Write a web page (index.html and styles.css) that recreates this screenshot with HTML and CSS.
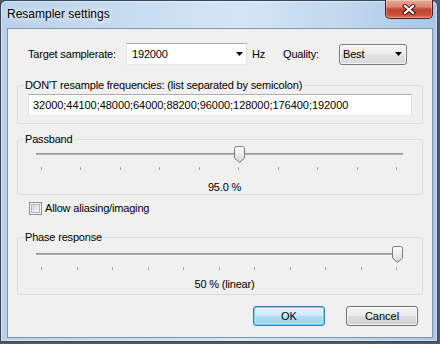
FILE: index.html
```html
<!DOCTYPE html>
<html lang="en">
<head>
    <meta charset="UTF-8">
    <title>Resampler settings</title>
    <link rel="stylesheet" href="styles.css">
</head>
<body>
    <div class="window">
        <div class="titlebar">
            <span class="title">Resampler settings</span>
            <button class="close" type="button">
                <svg width="14" height="11" viewBox="0 0 14 11">
                    <path d="M3 2L11 9M11 2L3 9" stroke="#3b1812" stroke-width="4.2" stroke-linecap="square"/>
                    <path d="M3 2L11 9M11 2L3 9" stroke="#fff" stroke-width="2.2" stroke-linecap="square"/>
                </svg>
            </button>
        </div>
        <div class="client">
            <div class="rate-row">
                <span class="rate-label">Target samplerate:</span>
                <div class="combo combo-edit">
                    <span>192000</span>
                    <svg width="7" height="4" viewBox="0 0 7 4"><path d="M0 0H7L3.5 4Z"/></svg>
                </div>
                <span class="hz">Hz</span>
                <span class="quality-label">Quality:</span>
                <div class="combo combo-list">
                    <span>Best</span>
                    <svg width="7" height="4" viewBox="0 0 7 4"><path d="M0 0H7L3.5 4Z"/></svg>
                </div>
            </div>

            <fieldset class="group freq-group">
                <legend>DON'T resample frequencies: (list separated by semicolon)</legend>
                <div class="textbox">32000;44100;48000;64000;88200;96000;128000;176400;192000</div>
            </fieldset>

            <fieldset class="group passband-group">
                <legend>Passband</legend>
                <div class="slider">
                    <div class="track"></div>
                    <div class="ticks">
                        <i></i><i></i><i></i><i></i><i></i><i></i><i></i><i></i><i></i><i></i>
                    </div>
                    <svg class="thumb" style="left: calc((100% - 11px) * 0.5556)" width="11" height="17" viewBox="0 0 11 17">
                        <defs>
                            <linearGradient id="thumbfill" x1="0" y1="0" x2="0" y2="1">
                                <stop offset="0" stop-color="#fdfdfd"/>
                                <stop offset="0.5" stop-color="#ececec"/>
                                <stop offset="1" stop-color="#d4d4d4"/>
                            </linearGradient>
                        </defs>
                        <path d="M0.5 2.5Q0.5 0.5 2.5 0.5H8.5Q10.5 0.5 10.5 2.5V12L5.5 16.5L0.5 12Z" fill="url(#thumbfill)" stroke="#7a7a7a"/>
                    </svg>
                </div>
                <div class="value">95.0 %</div>
            </fieldset>

            <div class="check-row">
                <span class="check"></span>
                <span>Allow aliasing/imaging</span>
            </div>

            <fieldset class="group phase-group">
                <legend>Phase response</legend>
                <div class="slider">
                    <div class="track"></div>
                    <div class="ticks">
                        <i></i><i></i><i></i><i></i><i></i><i></i><i></i><i></i><i></i><i></i><i></i>
                    </div>
                    <svg class="thumb" style="left: calc((100% - 11px) * 1)" width="11" height="17" viewBox="0 0 11 17">
                        <path d="M0.5 2.5Q0.5 0.5 2.5 0.5H8.5Q10.5 0.5 10.5 2.5V12L5.5 16.5L0.5 12Z" fill="url(#thumbfill)" stroke="#7a7a7a"/>
                    </svg>
                </div>
                <div class="value">50 % (linear)</div>
            </fieldset>

            <div class="buttons">
                <button class="btn btn-default" type="button">OK</button>
                <button class="btn" type="button">Cancel</button>
            </div>
        </div>
    </div>
</body>
</html>
```

FILE: styles.css
```css
/* reset */
*, *:before, *:after {
    margin: 0;
    padding: 0;
    box-sizing: border-box;
}
html, body {
    width: 440px;
    height: 344px;
}
body {
    overflow: hidden;
    background: #4f5b68;
    color: #000;
    font: 11px/13px "Liberation Sans", Arial, sans-serif;
    letter-spacing: -0.18px;
}

/* window frame */
.window {
    width: 438px;
    height: 342px;
    padding: 0 4px 3px 6px;
    border: 1px solid #34465a;
    border-radius: 6px 6px 0 0;
    background: linear-gradient(90deg, #b8d0e9 0%, #c8ddf1 30%, #d4e5f5 55%, #c2d8ee 78%, #a8c7e7 100%);
    box-shadow: inset 0 0 0 1px rgba(255, 255, 255, 0.45);
}
.titlebar {
    height: 27px;
    display: flex;
    align-items: flex-start;
}
.title {
    padding-top: 6px;
    font-size: 12px;
    line-height: 15px;
    letter-spacing: 0;
    text-shadow: 0 0 6px #fff, 0 0 10px rgba(255, 255, 255, 0.8);
}
.close {
    margin-left: auto;
    margin-top: -1px;
    width: 48px;
    height: 19px;
    display: flex;
    align-items: center;
    justify-content: center;
    border: 1px solid #4f1d17;
    border-top: 0;
    border-radius: 0 0 5px 5px;
    background: linear-gradient(#e9a898 0%, #dc8571 38%, #c5432d 52%, #c94e37 80%, #dc7458 100%);
    box-shadow: inset 0 0 0 1px rgba(255, 255, 255, 0.3);
}

/* client area */
.client {
    width: 426px;
    height: 310px;
    padding: 14px 9px 0;
    border: 1px solid #8294a8;
    background: #f0f0f0;
}

.rate-row {
    height: 22px;
    padding-left: 11px;
    display: flex;
    align-items: center;
}
.rate-label {
    width: 98px;
}
.hz {
    width: 31px;
    margin-left: 5px;
}
.quality-label {
    width: 56px;
}
.combo {
    display: flex;
    align-items: center;
    justify-content: space-between;
}
.combo-edit {
    width: 121px;
    height: 22px;
    padding: 0 3px 0 5px;
    background: #fff;
    border: 1px solid;
    border-color: #abadb3 #dbdfe6 #e3e9ef #e2e3ea;
}
.combo-list {
    width: 68px;
    height: 21px;
    padding: 0 4px 0 3px;
    border: 1px solid #7a7a7a;
    border-radius: 3px;
    background: linear-gradient(#f4f4f4, #ececec 50%, #e2e2e2 50%, #d9d9d9);
    box-shadow: inset 0 0 0 1px rgba(255, 255, 255, 0.7);
}

/* group boxes */
.group {
    min-width: 0;
    border: 1px solid #d5dfe5;
    border-radius: 3px;
}
.group legend {
    margin-left: 5px;
    padding: 0 2px;
    line-height: 14px;
}
.freq-group {
    margin-top: 13px;
}
.textbox {
    height: 22px;
    margin: 2px 10px 7px;
    padding-left: 4px;
    line-height: 20px;
    letter-spacing: -0.05px;
    white-space: nowrap;
    background: #fff;
    border: 1px solid;
    border-color: #abadb3 #dbdfe6 #e3e9ef #e2e3ea;
}
.passband-group {
    margin-top: 8px;
}
.phase-group {
    margin-top: 15px;
    padding-bottom: 3px;
}
.phase-group .slider {
    margin-top: 2px;
}
.phase-group .value {
    margin-top: 8px;
}

/* trackbar */
.slider {
    position: relative;
    height: 24px;
    margin: 0 19px 0 18px;
    padding-top: 7px;
}
.track {
    height: 2px;
    background: #b3b3b3;
    border-top: 1px solid #979797;
}
.ticks {
    height: 3px;
    margin-top: 12px;
    padding: 0 6px 0 5px;
    display: flex;
    justify-content: space-between;
}
.ticks i {
    width: 1px;
    background: #a7a7a7;
}
.thumb {
    position: absolute;
    top: 0;
    display: block;
}
.value {
    margin-top: 11px;
    padding-left: 9px;
    text-align: center;
}

/* checkbox */
.check-row {
    height: 13px;
    margin-top: 7px;
    padding-left: 12px;
    display: flex;
    align-items: center;
    gap: 3px;
}
.check {
    width: 13px;
    height: 13px;
    padding: 1px;
    border: 1px solid #8e8f8f;
    background: #f6f6f6;
}
.check:before {
    content: '';
    display: block;
    width: 9px;
    height: 9px;
    border: 1px solid #b3b7bc;
    background: linear-gradient(135deg, #d3d6da, #f7f7f7);
}

/* buttons */
.buttons {
    margin-top: 11px;
    padding-right: 5px;
    display: flex;
    justify-content: flex-end;
    gap: 21px;
}
.btn {
    width: 72px;
    height: 20px;
    font: inherit;
    color: #000;
    border: 1px solid #707070;
    border-radius: 3px;
    background: linear-gradient(#f2f2f2, #ebebeb 50%, #dddddd 50%, #cfcfcf);
    box-shadow: inset 0 0 0 1px rgba(255, 255, 255, 0.75);
}
.btn-default {
    border-color: #3c7fb1;
    background: linear-gradient(#e5f4fc, #cfeafa 50%, #b1dcf6 50%, #98cdef);
    box-shadow: inset 0 0 0 1px #5fd3f8, inset 0 0 0 2px rgba(255, 255, 255, 0.35);
}
```
